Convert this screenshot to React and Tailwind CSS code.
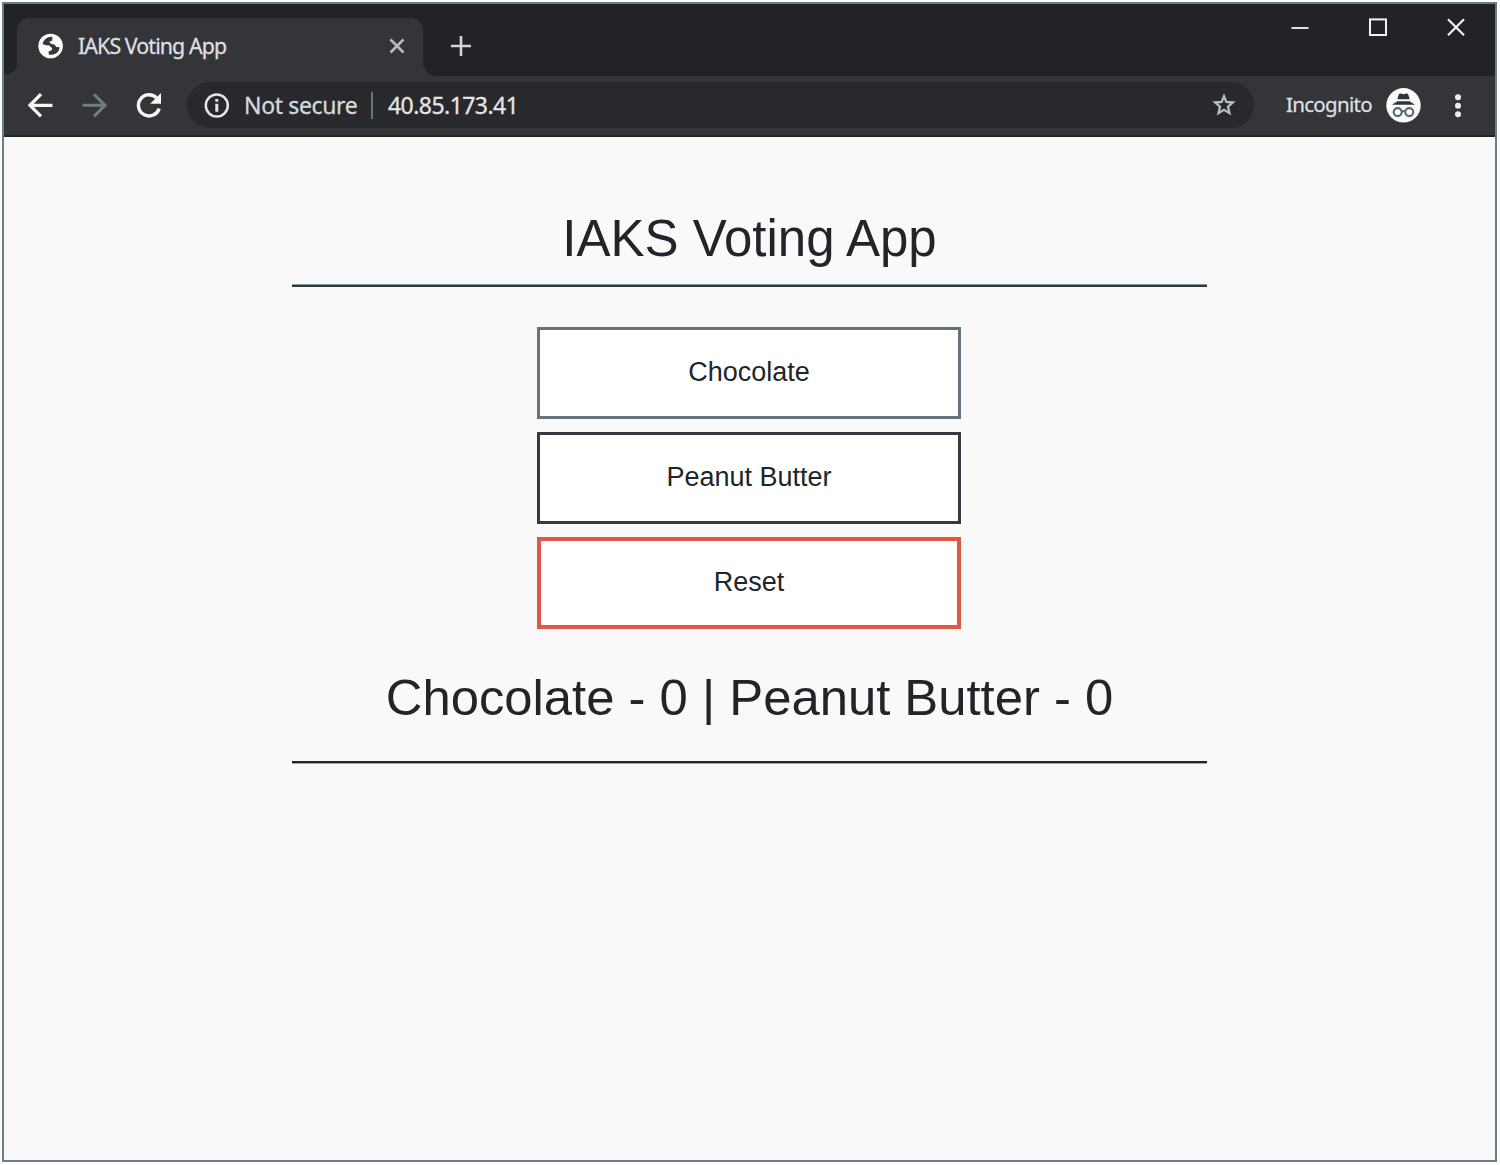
import React from "react";

function BackIcon() {
  return (
    <svg viewBox="0 0 36 36" className="h-9 w-9 shrink-0">
      <path d="M30.5 18.3 H8.5 M19 7.2 L8 18.3 L19 29.4" fill="none" stroke="#f6f6f6" strokeWidth="3.3" />
    </svg>
  );
}

function ForwardIcon() {
  return (
    <svg viewBox="0 0 36 36" className="h-9 w-9 shrink-0">
      <path d="M5.5 18.3 H27.5 M17 7.2 L28 18.3 L17 29.4" fill="none" stroke="#6f7d85" strokeWidth="3" />
    </svg>
  );
}

function ReloadIcon() {
  return (
    <svg viewBox="0 0 36 36" className="h-9 w-9 shrink-0">
      <path d="M28.2 21.4 A10.6 10.6 0 1 1 25.6 10.9" fill="none" stroke="#f6f6f6" strokeWidth="3.4" />
      <path d="M30 6 V16.8 H19.2 Z" fill="#f6f6f6" />
    </svg>
  );
}

function InfoIcon() {
  return (
    <svg viewBox="0 0 29 29" className="h-[29px] w-[29px] shrink-0">
      <circle cx="14.8" cy="14.5" r="11" fill="none" stroke="#e4e6e7" strokeWidth="2.5" />
      <path d="M14.8 12.8 V20.8 M14.8 7.9 V10.8" stroke="#e4e6e7" strokeWidth="3" />
    </svg>
  );
}

function StarIcon() {
  return (
    <svg viewBox="0 0 28 28" className="h-7 w-7 shrink-0">
      <path
        d="M14 5.2 L16.4 10.9 L22.9 11.5 L18 15.6 L19.5 22.2 L14 18.8 L8.5 22.2 L10 15.6 L5.1 11.5 L11.6 10.9 Z"
        fill="none"
        stroke="#b4bcc1"
        strokeWidth="2.3"
      />
    </svg>
  );
}

function GlobeIcon() {
  return (
    <svg viewBox="0 0 26 26" className="h-[26px] w-[26px] shrink-0">
      <circle cx="12.6" cy="13" r="12.3" fill="#fafafa" />
      <path
        d="M14.4 3.9 C9.6 3.4 5.8 6.4 4.6 11 L8 12.2 L11.6 12.4 L13 14.2 L14.2 15.2 L13.6 17.2 L10.6 18.4 L10.8 21.6 C14.8 22.4 19 20.8 20.9 17.2 L21.6 14.2 L18.2 14 L16.8 11.8 L12.4 10.6 L11.4 8.8 L14.2 7.4 Z"
        fill="#35363a"
      />
    </svg>
  );
}

function IncognitoIcon() {
  return (
    <svg viewBox="0 0 36 36" className="h-9 w-9 shrink-0">
      <circle cx="17.5" cy="18.3" r="17.2" fill="#fafafa" />
      <path d="M12.9 6.9 Q14.1 5.9 17.5 7.3 Q20.9 5.9 22.1 6.9 L23.7 12.3 H11.3 Z" fill="#303438" />
      <path d="M5.9 17.7 L11.5 14.3 H23.5 L29.1 17.7 Z" fill="#303438" />
      <g fill="none" stroke="#5a6970" strokeWidth="2.1">
        <circle cx="11.7" cy="25.1" r="4" />
        <circle cx="23.3" cy="25.1" r="4" />
        <path d="M15.7 24.6 Q17.5 23.4 19.3 24.6" />
      </g>
    </svg>
  );
}

function TitleBar() {
  return (
    <div className="flex h-[72px] bg-[#343539]">
      <div className="h-[70px] w-[13px] rounded-br-[10px] bg-[#222327]" />
      <div className="w-[406px] bg-[#222327] pt-3.5">
        <div className="flex h-[58px] items-center rounded-t-xl bg-[#343539] pb-0.5 pl-[21px] pr-[17px]">
          <GlobeIcon />
          <span className="ml-3.5 whitespace-nowrap text-[21.4px] tracking-[-0.92px] text-[#dddfe1] [-webkit-text-stroke:0.3px]">
            IAKS Voting App
          </span>
          <svg viewBox="0 0 18 18" className="ml-auto h-[18px] w-[18px]">
            <path d="M2.5 2.5 L15.5 15.5 M15.5 2.5 L2.5 15.5" stroke="#b4bcc1" strokeWidth="2.6" />
          </svg>
        </div>
      </div>
      <div className="flex flex-1 items-start rounded-bl-[14px] bg-[#222327] pl-[27px]">
        <svg viewBox="0 0 22 22" className="mt-[31px] h-[22px] w-[22px]">
          <path d="M11 1 V21 M1 11 H21" stroke="#d2d4d5" strokeWidth="2.6" />
        </svg>
        <div className="ml-auto mr-[29px] mt-[13px] flex items-center gap-[58px]">
          <svg viewBox="0 0 20 20" className="h-5 w-5">
            <path d="M1.5 11 H18.5" stroke="#e2e2e2" strokeWidth="2" />
          </svg>
          <svg viewBox="0 0 20 20" className="h-5 w-5">
            <rect x="2" y="2.4" width="16" height="15.6" fill="none" stroke="#f2f2f2" strokeWidth="2" />
          </svg>
          <svg viewBox="0 0 20 20" className="h-5 w-5">
            <path d="M2 2.2 L18 18.2 M18 2.2 L2 18.2" stroke="#f2f2f2" strokeWidth="2.2" />
          </svg>
        </div>
      </div>
    </div>
  );
}

function Toolbar() {
  return (
    <div className="flex h-[61px] items-center border-b-2 border-[#222327] bg-[#343539] pb-px pl-[18px] pr-[27px]">
      <div className="flex gap-[18.5px]">
        <BackIcon />
        <ForwardIcon />
        <ReloadIcon />
      </div>
      <div className="ml-5 flex h-[46px] w-[1067px] items-center rounded-full bg-[#28292d] pl-[15px] pr-4">
        <InfoIcon />
        <span className="ml-[13px] w-[115px] whitespace-nowrap text-[23px] tracking-[-0.35px] text-[#d6d8da] [-webkit-text-stroke:0.3px]">
          Not secure
        </span>
        <span className="ml-3 h-[27px] w-[2px] bg-[#64747d]" />
        <span className="ml-[15px] whitespace-nowrap text-[23px] tracking-[-0.55px] text-[#e4e5e6] [-webkit-text-stroke:0.3px]">
          40.85.173.41
        </span>
        <span className="ml-auto">
          <StarIcon />
        </span>
      </div>
      <span className="ml-8 w-[100px] whitespace-nowrap pb-px text-[20.5px] tracking-[-0.7px] text-[#dcdee0] [-webkit-text-stroke:0.3px]">
        Incognito
      </span>
      <IncognitoIcon />
      <svg viewBox="0 0 20 26" className="ml-auto h-[26px] w-5">
        <circle cx="10" cy="5.2" r="3" fill="#eee" />
        <circle cx="10" cy="13.8" r="3" fill="#eee" />
        <circle cx="10" cy="22.2" r="3" fill="#eee" />
      </svg>
    </div>
  );
}

function VotingPage() {
  return (
    <main className="flex flex-1 flex-col items-center bg-[#f9f9f9] pt-[72px] font-['Liberation_Sans',Arial,sans-serif] text-[#212529]">
      <div className="flex w-[915px] flex-col items-center">
        <h1 className="h-[75px] whitespace-nowrap text-[51px] leading-[60px]">IAKS Voting App</h1>
        <div className="h-[3px] w-full border-t border-[#8a989e] bg-[#2e3c42]" />
        <div className="mt-10 flex flex-col gap-[13px] pr-px">
          <button className="h-[92px] w-[424px] border-[3px] border-[#63747c] bg-white pb-0.5 text-[27px]">
            Chocolate
          </button>
          <button className="h-[92px] w-[424px] border-[3px] border-[#343a40] bg-white pb-0.5 text-[27px]">
            Peanut Butter
          </button>
          <button className="h-[92px] w-[424px] border-4 border-[#e25847] bg-white pb-0.5 text-[27px]">
            Reset
          </button>
        </div>
        <p className="mt-[39px] h-[93px] whitespace-nowrap text-[50.8px] leading-[60px]">
          Chocolate - 0 | Peanut Butter - 0
        </p>
        <div className="h-[3px] w-full border-b border-[#9aa5aa] bg-[#20282c]" />
      </div>
    </main>
  );
}

export default function App() {
  return (
    <div className="h-[1165px] w-[1500px] overflow-hidden bg-[#fdfdfd] pl-0.5 pt-0.5">
      <div className="flex h-[1160px] w-[1495px] flex-col border-2 border-[#6b7c84] font-['Noto_Sans','Open_Sans',sans-serif]">
        <TitleBar />
        <Toolbar />
        <VotingPage />
      </div>
    </div>
  );
}
